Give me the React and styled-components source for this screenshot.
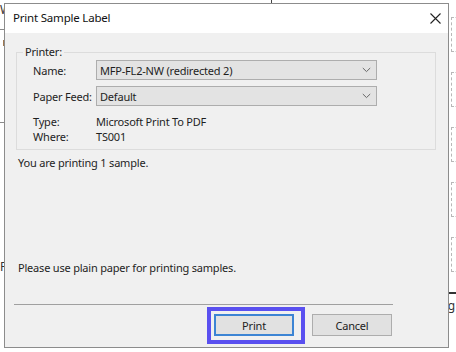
import styled, { createGlobalStyle } from "styled-components";

const GlobalStyle = createGlobalStyle`
  html, body {
    margin: 0;
    padding: 0;
    background: #ffffff;
  }
  body {
    font-family: "Noto Sans", "Open Sans", sans-serif;
    font-size: 11px;
    letter-spacing: -0.2px;
    color: #1e1e1e;
  }
  * {
    box-sizing: border-box;
  }
`

const Desktop = styled.div`
  position: relative;
  width: 456px;
  height: 352px;
  overflow: hidden;
  padding: 3px 0 0 4px;
  background: #ffffff;
`

// bits of the document window peeking out behind the dialog
const Scrap = styled.div`
  position: absolute;
  left: ${(p) => p.x}px;
  top: ${(p) => p.y}px;
  width: ${(p) => p.w}px;
  height: ${(p) => p.h}px;
  background: ${(p) => p.color || "transparent"};
`

const DashedCell = styled.div`
  position: absolute;
  left: 451px;
  top: ${(p) => p.y}px;
  width: 12px;
  height: 35px;
  border: 1px dashed #b8b8b8;
`

const ScrapText = styled.span`
  position: absolute;
  left: ${(p) => p.x}px;
  top: ${(p) => p.y}px;
  font-size: 12px;
  line-height: 14px;
  color: #333;
  text-decoration: ${(p) => (p.underline ? "underline" : "none")};
  text-decoration-color: #5a50f0;
`

const Window = styled.div`
  position: relative;
  z-index: 1;
  width: 445px;
  height: 345px;
  border: 1px solid #8c8c8c;
  display: flex;
  flex-direction: column;
  background: #f0f0f0;
`

const TitleBar = styled.div`
  height: 29px;
  flex: none;
  background: #ffffff;
  display: flex;
  align-items: center;
  justify-content: space-between;
  padding: 0 8px 0 8px;
`

const Title = styled.span`
  font-size: 11.5px;
  line-height: 16px;
  color: #111;
  margin-top: -1px;
`

const CloseButton = styled.button`
  width: 12px;
  height: 12px;
  padding: 0;
  border: none;
  background: transparent;
  display: flex;
  align-items: center;
  justify-content: center;
  margin-right: -1px;
`

const Body = styled.div`
  flex: 1;
  display: flex;
  flex-direction: column;
  padding: 0 12px 0 11px;
`

const GroupBox = styled.fieldset`
  margin: 11px 0 0 0;
  padding: 0 12px 5px 16px;
  border: 1px solid #dcdcdc;
  min-width: 0;
`

const GroupLegend = styled.legend`
  line-height: 16px;
  padding: 0 2px;
  margin-left: -10px;
  color: #222;
`

const FieldRow = styled.div`
  display: flex;
  align-items: center;
  margin-top: ${(p) => p.gap || 0}px;
`

const FieldLabel = styled.span`
  width: 63px;
  flex: none;
  line-height: 15px;
  white-space: nowrap;
`

const FieldValue = styled.span`
  line-height: 15px;
`

const Select = styled.div`
  width: 281px;
  height: 20px;
  border: 1px solid #adadad;
  background: #e3e3e3;
  display: flex;
  align-items: center;
  justify-content: space-between;
  padding: 0 5px 0 3px;
  line-height: 15px;
`

const Message = styled.p`
  margin: ${(p) => p.top || 0}px 0 0 2px;
  line-height: 15px;
`

const Spacer = styled.div`
  flex: 1;
`

const Footer = styled.div`
  flex: none;
  padding: 0 44px 11px 0;
`

const Separator = styled.hr`
  margin: 29px 43px 0 -2px;
  border: none;
  border-top: 1px solid #a0a0a0;
  height: 0;
`

const ButtonRow = styled.div`
  display: flex;
  justify-content: flex-end;
  gap: 18px;
  margin-top: 9px;
`

const FocusRing = styled.div`
  position: relative;
  display: flex;
`

const Highlight = styled.div`
  position: absolute;
  left: -7px;
  top: -7px;
  right: -11px;
  bottom: -8px;
  border: 4px solid #5a50f0;
  pointer-events: none;
`

const DialogButton = styled.button`
  width: 80px;
  height: 22px;
  font-family: inherit;
  font-size: 11px;
  letter-spacing: -0.2px;
  color: #222;
  background: #e1e1e1;
  border: ${(p) => (p.primary ? "2px solid #3c84d4" : "1px solid #adadad")};
  padding: 0;
  line-height: 15px;
`

function Chevron() {
  return (
    <svg width="9" height="6" viewBox="0 0 9 6">
      <path d="M0.8 1 L4.5 4.6 L8.2 1" fill="none" stroke="#666" strokeWidth="1" />
    </svg>
  )
}

function CloseIcon() {
  return (
    <svg width="11" height="11" viewBox="0 0 11 11">
      <path d="M0.5 0.5 L10.5 10.5 M10.5 0.5 L0.5 10.5" stroke="#222" strokeWidth="1.1" />
    </svg>
  )
}

export default function App() {
  return (
    <Desktop>
      <GlobalStyle />
      <ScrapText x={0} y={3}>W</ScrapText>
      <Scrap x={0} y={29} w={4} h={1} color="#8a8a8a" />
      <Scrap x={3} y={40} w={1} h={6} color="#a07850" />
      <Scrap x={0} y={122} w={4} h={1} color="#8a8a8a" />
      <ScrapText x={0} y={260}>F</ScrapText>
      <Scrap x={271} y={0} w={1} h={3} color="#444" />
      {[17, 72, 127, 182, 237].map((y) => (
        <DashedCell key={y} y={y} />
      ))}
      <Scrap x={449} y={292} w={7} h={2} color="#333" />
      <ScrapText x={443} y={299} underline>rg</ScrapText>

      <Window>
        <TitleBar>
          <Title>Print Sample Label</Title>
          <CloseButton aria-label="Close">
            <CloseIcon />
          </CloseButton>
        </TitleBar>
        <Body>
          <GroupBox>
            <GroupLegend>Printer:</GroupLegend>
            <FieldRow>
              <FieldLabel>Name:</FieldLabel>
              <Select>
                <span>MFP-FL2-NW (redirected 2)</span>
                <Chevron />
              </Select>
            </FieldRow>
            <FieldRow gap={6}>
              <FieldLabel>Paper Feed:</FieldLabel>
              <Select>
                <span>Default</span>
                <Chevron />
              </Select>
            </FieldRow>
            <FieldRow gap={8}>
              <FieldLabel>Type:</FieldLabel>
              <FieldValue>Microsoft Print To PDF</FieldValue>
            </FieldRow>
            <FieldRow>
              <FieldLabel>Where:</FieldLabel>
              <FieldValue>TS001</FieldValue>
            </FieldRow>
          </GroupBox>
          <Message top={5}>You are printing 1 sample.</Message>
          <Spacer />
          <Message>Please use plain paper for printing samples.</Message>
          <Separator />
          <Footer>
            <ButtonRow>
              <FocusRing>
                <DialogButton primary>Print</DialogButton>
                <Highlight />
              </FocusRing>
              <DialogButton>Cancel</DialogButton>
            </ButtonRow>
          </Footer>
        </Body>
      </Window>
    </Desktop>
  )
}
